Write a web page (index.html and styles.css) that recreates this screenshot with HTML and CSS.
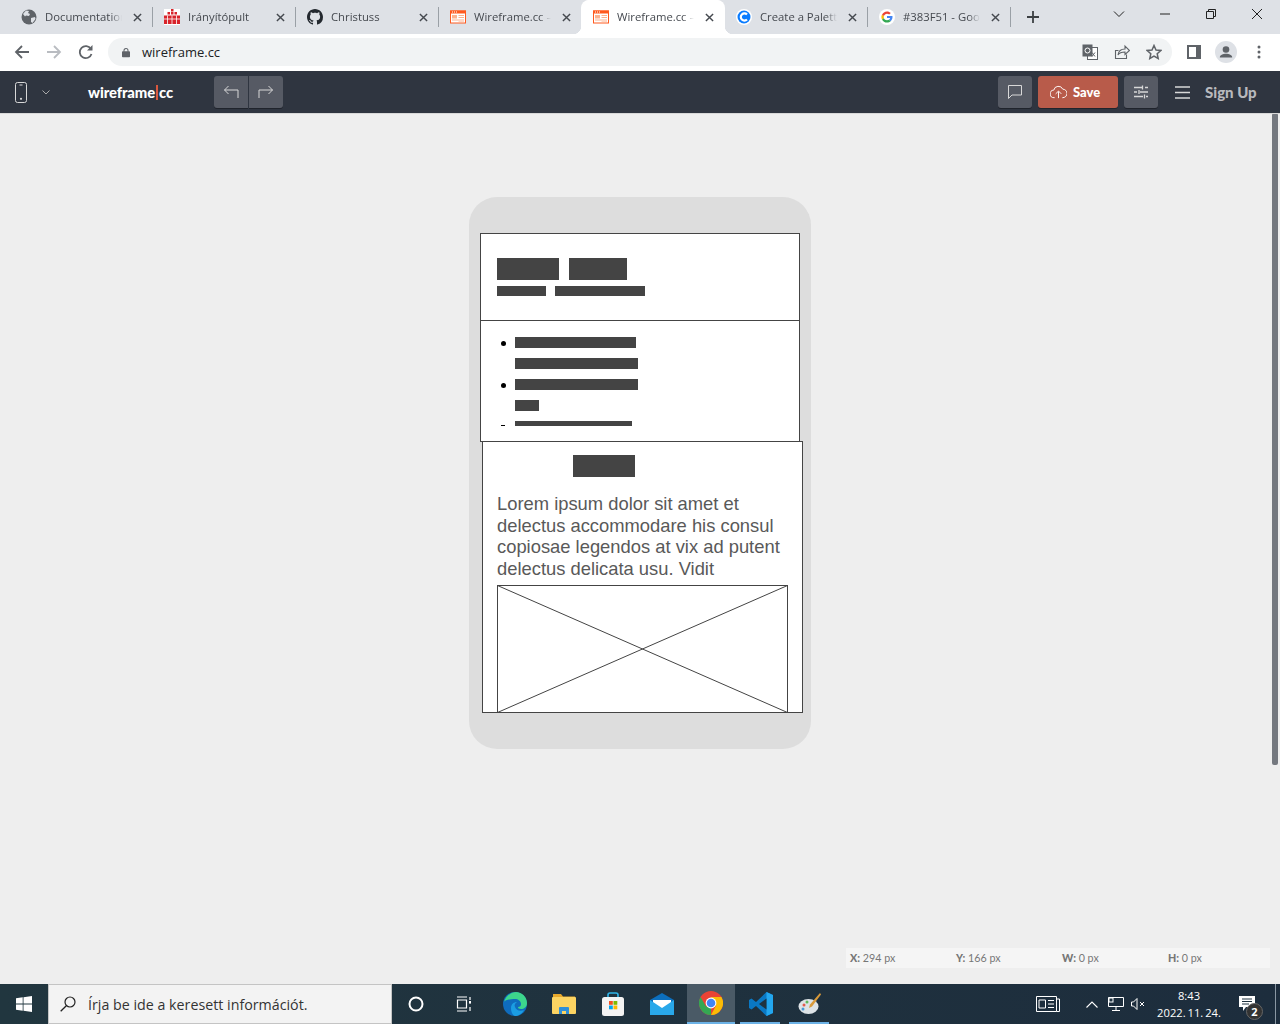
FILE: index.html
```html
<!DOCTYPE html>
<html lang="hu">
<head>
<meta charset="utf-8">
<title>Wireframe.cc</title>
<link rel="stylesheet" href="styles.css">
</head>
<body>
<div class="screen">
  <header class="tabstrip">
    <div class="tab">
      <svg class="fav" viewBox="0 0 16 16"><circle cx="8" cy="8" r="7.5" fill="#5f6368"/><path d="M2 5l3-3.5 3 .5-1 2 2 1-1 2-3-.5-1 1zM10 9l4-1 .5 2-3 4-1.500-1z" fill="#dee1e6"/></svg>
      <span class="title">Documentation</span>
      <svg class="close" viewBox="0 0 10 10"><path d="M1 1l8 8M9 1l-8 8"/></svg>
    </div>
    <div class="tab">
      <svg class="fav" viewBox="0 0 16 16"><rect width="16" height="16" fill="#fff"/><path d="M7 0h2.500v2.500H7zM3.500 3h2.500v2.500H3.500zM7 3h2.500v2.500H7zM10.500 3H13v2.500h-2.500zM0 6.500h16V15H0z" fill="#d8232a"/><path d="M0 10h16M3.500 6.500V15M8 6.500V15M12.500 6.500V15" stroke="#fff" stroke-width=".8"/></svg>
      <span class="title">Irányítópult</span>
      <svg class="close" viewBox="0 0 10 10"><path d="M1 1l8 8M9 1l-8 8"/></svg>
    </div>
    <div class="tab">
      <svg class="fav" viewBox="0 0 16 16"><path fill="#24292f" d="M8 0C3.580 0 0 3.580 0 8c0 3.540 2.290 6.530 5.470 7.590.4.070.55-.17.55-.38 0-.19-.01-.82-.01-1.490-2.010.37-2.530-.49-2.690-.94-.09-.23-.48-.94-.82-1.130-.28-.15-.68-.52-.01-.53.63-.01 1.080.58 1.230.82.720 1.210 1.870.87 2.330.66.070-.52.280-.87.510-1.070-1.780-.2-3.640-.89-3.640-3.950 0-.87.310-1.590.820-2.150-.08-.2-.36-1.020.08-2.120 0 0 .67-.21 2.200.82.640-.18 1.320-.27 2-.27s1.360.09 2 .27c1.530-1.040 2.200-.82 2.200-.82.440 1.100.160 1.920.080 2.120.510.560.820 1.270.820 2.150 0 3.070-1.870 3.750-3.650 3.950.290.250.540.730.540 1.480 0 1.070-.010 1.930-.010 2.200 0 .21.150.46.550.38A8.010 8.010 0 0 0 16 8c0-4.420-3.580-8-8-8z"/></svg>
      <span class="title">Christuss</span>
      <svg class="close" viewBox="0 0 10 10"><path d="M1 1l8 8M9 1l-8 8"/></svg>
    </div>
    <div class="tab tab-before-active">
      <svg class="fav" viewBox="0 0 16 13"><rect x=".5" y=".5" width="15" height="12" fill="#fff" stroke="#ff5a1f"/><path d="M0 0h16v3H0z" fill="#ff5a1f"/><path d="M2 1h1v1H2zM4 1h1v1H4zM6 1h1v1H6z" fill="#fff"/><path d="M2 4.500h5v3.500H2zM8.500 4.500H14v1H8.500zM8.500 6.500H14v1H8.500zM2 9h12v1H2zM8.500 11H14v.8H8.500z" fill="#fbb28f"/></svg>
      <span class="title">Wireframe.cc –</span>
      <svg class="close" viewBox="0 0 10 10"><path d="M1 1l8 8M9 1l-8 8"/></svg>
    </div>
    <div class="tab tab-active">
      <svg class="fav" viewBox="0 0 16 13"><rect x=".5" y=".5" width="15" height="12" fill="#fff" stroke="#ff5a1f"/><path d="M0 0h16v3H0z" fill="#ff5a1f"/><path d="M2 1h1v1H2zM4 1h1v1H4zM6 1h1v1H6z" fill="#fff"/><path d="M2 4.500h5v3.500H2zM8.500 4.500H14v1H8.500zM8.500 6.500H14v1H8.500zM2 9h12v1H2zM8.500 11H14v.8H8.500z" fill="#fbb28f"/></svg>
      <span class="title">Wireframe.cc –</span>
      <svg class="close" viewBox="0 0 10 10"><path d="M1 1l8 8M9 1l-8 8"/></svg>
    </div>
    <div class="tab">
      <svg class="fav" viewBox="0 0 16 16"><circle cx="8" cy="8" r="8" fill="#fff"/><circle cx="8" cy="8" r="6.500" fill="#0a7cff"/><path d="M11 5.500a3.600 3.600 0 1 0 0 5" fill="none" stroke="#fff" stroke-width="2.200"/></svg>
      <span class="title">Create a Palette</span>
      <svg class="close" viewBox="0 0 10 10"><path d="M1 1l8 8M9 1l-8 8"/></svg>
    </div>
    <div class="tab">
      <svg class="fav" viewBox="0 0 16 16"><circle cx="8" cy="8" r="8" fill="#fff"/><path d="M13.500 8.100c0-.4 0-.8-.1-1.100H8v2.100h3.100c-.1.700-.5 1.300-1.200 1.700l1.800 1.400c1.100-1 1.800-2.400 1.800-4.100z" fill="#4285f4"/><path d="M8 13.600c1.500 0 2.800-.5 3.700-1.400l-1.800-1.400c-.5.300-1.100.5-1.900.5-1.500 0-2.700-1-3.100-2.300L3 10.400c.9 1.900 2.800 3.200 5 3.200z" fill="#34a853"/><path d="M4.900 9c-.2-.6-.2-1.300 0-1.900L3 5.600c-.8 1.500-.8 3.300 0 4.800z" fill="#fbbc05"/><path d="M8 4.700c.8 0 1.600.3 2.200.9l1.600-1.600C10.800 3 9.500 2.400 8 2.400c-2.200 0-4.100 1.300-5 3.200l1.900 1.500C5.300 5.700 6.500 4.700 8 4.700z" fill="#ea4335"/></svg>
      <span class="title">#383F51 - Google</span>
      <svg class="close" viewBox="0 0 10 10"><path d="M1 1l8 8M9 1l-8 8"/></svg>
    </div>
    <svg class="newtab" viewBox="0 0 12 12"><path d="M6 0v12M0 6h12"/></svg>
    <div class="winctrls">
      <svg class="winbtn" viewBox="0 0 12 12"><path d="M1 3.500l5 5 5-5"/></svg>
      <svg class="winbtn" viewBox="0 0 12 12"><path d="M1 6h10"/></svg>
      <svg class="winbtn" viewBox="0 0 12 12"><path d="M1.500 3.500h7v7h-7zM3.500 3.500v-2h7v7h-2"/></svg>
      <svg class="winbtn" viewBox="0 0 12 12"><path d="M1 1l10 10M11 1L1 11"/></svg>
    </div>
  </header>

  <nav class="toolbar">
    <svg class="nav-ic" viewBox="0 0 16 16"><path d="M15 8H2M8 2L2 8l6 6" fill="none" stroke="#5f6368" stroke-width="1.800"/></svg>
    <svg class="nav-ic" viewBox="0 0 16 16"><path d="M1 8h13M8 2l6 6-6 6" fill="none" stroke="#b9bcc1" stroke-width="1.800"/></svg>
    <svg class="nav-ic" viewBox="0 0 16 16"><path d="M13.500 10a6 6 0 1 1-.6-5" fill="none" stroke="#5f6368" stroke-width="1.800"/><path d="M14.500 1v5.500H9z" fill="#5f6368"/></svg>
    <div class="omnibox">
      <svg class="lock" viewBox="0 0 10 12"><path d="M2.500 5V3.500a2.500 2.500 0 0 1 5 0V5" fill="none" stroke="#5f6368" stroke-width="1.300"/><rect y="4.500" width="10" height="7.500" rx="1" fill="#5f6368"/></svg>
      <span class="url">wireframe.cc</span>
      <svg class="omni-ic" viewBox="0 0 16 16"><rect x="5.500" y="3.500" width="10" height="12" fill="#fff" stroke="#5f6368"/><rect x=".5" y=".5" width="10" height="12" fill="#5f6368"/><circle cx="5.500" cy="6.500" r="2.500" fill="none" stroke="#fff"/><path d="M10 8.500l3 4M13 8.500l-3 4" stroke="#5f6368"/></svg>
      <svg class="omni-ic" viewBox="0 0 16 16"><path d="M12.500 10.500v4h-11v-8h3" fill="none" stroke="#5f6368" stroke-width="1.100"/><path d="M4 11c.5-4 3.500-6 7-6V2l4.500 4.500L11 10.500V8c-3 0-5.500.5-7 3z" fill="none" stroke="#5f6368" stroke-width="1.100"/></svg>
      <svg class="omni-ic" viewBox="0 0 16 16"><path d="M8 1.500l2 4.500 4.800.5-3.600 3.200 1 4.800L8 12.100 3.800 14.500l1-4.800L1.200 6.500 6 6z" fill="none" stroke="#5f6368" stroke-width="1.500"/></svg>
    </div>
    <svg class="side-ic" viewBox="0 0 14 14"><path d="M0 0h14v14H0zM2 2v10h7V2z" fill="#5f6368" fill-rule="evenodd"/></svg>
    <svg class="avatar" viewBox="0 0 22 22"><circle cx="11" cy="11" r="11" fill="#dee1e6"/><circle cx="11" cy="8.500" r="3.300" fill="#5f6368"/><path d="M4.800 16.500c0-2.600 3.200-3.700 6.200-3.700s6.200 1.100 6.200 3.700z" fill="#5f6368"/></svg>
    <svg class="dots" viewBox="0 0 4 14"><circle cx="2" cy="2" r="1.500"/><circle cx="2" cy="7" r="1.500"/><circle cx="2" cy="12" r="1.500"/></svg>
  </nav>

  <div class="appbar">
    <svg class="device" viewBox="0 0 12 21"><rect x=".5" y=".5" width="11" height="20" rx="2"/><path d="M4.500 3h3"/><circle cx="6" cy="16.800" r="1.100" fill="#d8d8d8" stroke="none"/></svg>
    <svg class="device-caret" viewBox="0 0 8 5"><path d="M.5.500L4 4 7.500.5"/></svg>
    <div class="logo">wireframe<span class="logo-bar"></span>cc</div>
    <div class="btn-group">
      <span class="btn btn-hist"><svg class="btn-ic" viewBox="0 0 16 14"><path d="M15 13V5H1.500M5.500 1L1.500 5l4 4"/></svg></span>
      <span class="btn btn-hist"><svg class="btn-ic" viewBox="0 0 16 14"><path d="M1 13V5h13.500M10.500 1l4 4-4 4"/></svg></span>
    </div>
    <span class="btn btn-tool btn-comment"><svg class="btn-ic" viewBox="0 0 14 14"><path d="M.5.500h13v9.500H4L.5 13.500z"/></svg></span>
    <span class="btn-save"><svg class="save-ic" viewBox="0 0 18 14"><path d="M5 13H4.500a4 4 0 0 1-.5-8 5 5 0 0 1 9.500-1 4.500 4.500 0 0 1 0 9H13M9 13.500V6.500M6 9l3-3 3 3"/></svg>Save</span>
    <span class="btn btn-tool"><svg class="btn-ic btn-ic-wide" viewBox="0 0 14 14"><path d="M0 2.500h8M11 2.500h3M8.500 .5v4M0 7h3M6 7h8M5 5v4M0 11.500h9M12 11.500h2M10.500 9.500v4"/></svg></span>
    <svg class="burger" viewBox="0 0 15 13"><path d="M0 1h15M0 6.500h15M0 12h15"/></svg>
    <span class="signup">Sign Up</span>
  </div>

  <main class="workspace">
    <div class="canvas">
      <div class="phone">
        <section class="wf wf-header">
          <span class="ink ink-a"></span><span class="ink ink-b"></span>
          <span class="ink ink-c"></span><span class="ink ink-d"></span>
        </section>
        <section class="wf wf-list">
          <span class="ink li-1"></span><span class="ink li-2"></span><span class="ink li-3"></span><span class="ink li-4"></span>
          <span class="ink li-5"></span>
          <i class="bullet bullet-1"></i><i class="bullet bullet-2"></i><i class="bullet bullet-3"></i>
        </section>
        <section class="wf wf-body">
          <span class="ink ink-head"></span>
          <p class="lorem">Lorem ipsum dolor sit amet et<br>delectus accommodare his consul<br>copiosae legendos at vix ad putent<br>delectus delicata usu. Vidit</p>
          <svg class="placeholder" viewBox="0 0 291 128" preserveAspectRatio="none"><rect x=".5" y=".5" width="290" height="127"/><path d="M.5.500l290 127M290.500.500L.5 127.500"/></svg>
        </section>
      </div>
      <div class="status">
        <span><b>X:</b> 294 px</span><span><b>Y:</b> 166 px</span><span><b>W:</b> 0 px</span><span><b>H:</b> 0 px</span>
      </div>
    </div>
    <div class="scrollbar"><div class="thumb"></div></div>
  </main>

  <footer class="taskbar">
    <div class="start"><svg class="winlogo" viewBox="0 0 16 16"><path d="M0 2.300l6.700-1v6.300H0zM7.500 1.200L16 0v7.600H7.500zM0 8.400h6.700v6.300l-6.700-1zM7.500 8.400H16V16l-8.500-1.200z" fill="#fff"/></svg></div>
    <div class="search">
      <svg class="search-ic" viewBox="0 0 16 16"><circle cx="10" cy="6" r="5" fill="none" stroke="#222" stroke-width="1.200"/><path d="M6.300 9.700L.7 15.300" stroke="#222" stroke-width="1.300"/></svg>
      <span class="search-text">Írja be ide a keresett információt.</span>
    </div>
    <div class="tb-slot tb-narrow"><svg class="tb-ic" viewBox="0 0 16 16"><circle cx="8" cy="8" r="6.500" fill="none" stroke="#fff" stroke-width="2"/></svg></div>
    <div class="tb-slot tb-narrow"><svg class="tb-ic" viewBox="0 0 16 16"><path d="M1 1h10M1 15h10M1.500 4h9v8h-9zM14 1v3M14 7v1M14 11v4" fill="none" stroke="#fff" stroke-width="1.200"/><rect x="13" y="5" width="2" height="2" fill="#fff"/></svg></div>
    <div class="tb-slot tb-first"><svg class="tb-app" viewBox="0 0 24 24"><circle cx="12" cy="12" r="12" fill="#0f6cbd"/><path d="M1 10C3 3 9 0 13 0c6 0 11 5 11 11 0 4-3 6-6 6-2 0-3-1-3-2 2 0 3-1 3-3 0-3-3-5-6-5-5 0-10 1-11 3z" fill="#3dd68c"/><path d="M8 16c0-4 3-6 6-6-2 1-3 3-2 5 1 3 5 5 9 3-2 4-6 6-9 6-3-1-4-5-4-8z" fill="#1b9de2"/></svg></div>
    <div class="tb-slot"><svg class="tb-app" viewBox="0 0 24 20"><path d="M1 0h8l2 2.500h12V5H1z" fill="#e8a92c"/><rect x="0" y="3" width="24" height="17" rx="1" fill="#fcd462"/><path d="M7 20v-6a1 1 0 0 1 1-1h8a1 1 0 0 1 1 1v6h-3v-3h-4v3z" fill="#2f8fd8"/></svg></div>
    <div class="tb-slot"><svg class="tb-app" viewBox="0 0 24 24"><path d="M7 7V3a2 2 0 0 1 2-2h6a2 2 0 0 1 2 2v4" fill="none" stroke="#30b5e8" stroke-width="1.600"/><rect x="1" y="5" width="22" height="19" rx="2.500" fill="#f3f3f3"/><rect x="8" y="9" width="3.800" height="3.800" fill="#f25022"/><rect x="12.500" y="9" width="3.800" height="3.800" fill="#7fba00"/><rect x="8" y="13.500" width="3.800" height="3.800" fill="#00a4ef"/><rect x="12.500" y="13.500" width="3.800" height="3.800" fill="#ffb900"/></svg></div>
    <div class="tb-slot"><svg class="tb-app" viewBox="0 0 24 22"><path d="M0 7L12 0l12 7v15H0z" fill="#0c6fbd"/><path d="M3 7h18v7l-9 5-9-5z" fill="#fff"/><path d="M0 7l12 8 12-8v15H0z" fill="#29a8ea"/></svg></div>
    <div class="tb-slot tb-chrome"><svg class="tb-app" viewBox="0 0 24 24"><circle cx="12" cy="12" r="12" fill="#ea4335"/><path d="M12 24A12 12 0 0 1 1.600 6L7 15.500l5 0z" fill="#34a853"/><path d="M12 24a12 12 0 0 0 10.400-18H12l5 8.500z" fill="#fbbc05"/><circle cx="12" cy="12" r="5.400" fill="#fff"/><circle cx="12" cy="12" r="4.300" fill="#4285f4"/></svg></div>
    <div class="tb-slot tb-open"><svg class="tb-app" viewBox="0 0 24 24"><path d="M17.500 0L24 3v18l-6.500 3L7 14l-4.500 3.500L0 16V8l2.500-1.500L7 10z" fill="#0a78c4"/><path d="M17.500 0L24 3v18l-6.500 3z" fill="#23a7ef"/><path d="M17.500 6.500V17.500L10 12z" fill="#1f3340"/></svg></div>
    <div class="tb-slot tb-open"><svg class="tb-app" viewBox="0 0 24 24"><ellipse cx="10.500" cy="14.500" rx="10" ry="7.500" fill="#dde3e6"/><circle cx="6" cy="13" r="1.500" fill="#e25b4e"/><circle cx="9" cy="10" r="1.500" fill="#5fba5c"/><circle cx="5" cy="17" r="1.500" fill="#4a9ad9"/><path d="M22 1l1 1.500-9 12-3 1.500 1-3.500z" fill="#d99a3a"/></svg></div>
    <div class="tray">
      <svg class="tray-news" viewBox="0 0 24 16"><path d="M.5.500h20v15H.5zM20.500 3h3v12.500h-3M3 4h6.500v8H3zM12 4.500h6M12 8h6M12 11.500h6" fill="none" stroke="#fff"/></svg>
      <svg class="tray-chev" viewBox="0 0 12 7"><path d="M.5 6.500L6 1l5.500 5.500" fill="none" stroke="#fff" stroke-width="1.100"/></svg>
      <svg class="tray-net" viewBox="0 0 16 14"><path d="M.5.500h15v9H.5zM8 9.500v4M4 13.500h8" fill="none" stroke="#fff"/><rect x="1" y="1" width="4" height="4" fill="#1f3340" stroke="#fff"/></svg>
      <svg class="tray-vol" viewBox="0 0 14 12"><path d="M.5 4h2L6 .5v11L2.500 8h-2zM9 4l4 4M13 4l-4 4" fill="none" stroke="#fff"/></svg>
      <div class="clock"><span>8:43</span><span>2022. 11. 24.</span></div>
      <div class="notify">
        <svg class="notify-ic" viewBox="0 0 16 15"><path d="M0 0h16v11H7l-3 4v-4H0z" fill="#fff"/><path d="M3 3h10M3 5.500h10M3 8h7" stroke="#1f3340"/></svg>
        <span class="badge">2</span>
      </div>
      <span class="peek"></span>
    </div>
  </footer>
</div>
</body>
</html>
```

FILE: styles.css
```css
* { box-sizing: border-box; }
html, body { margin: 0; height: 100%; overflow: hidden; }
body { font-family: "Open Sans", "Noto Sans", sans-serif; }
.screen { width: 1280px; height: 1024px; display: flex; flex-direction: column; background: #eee; }

/* tab strip */
.tabstrip { height: 34px; flex: none; background: #dee1e6; display: flex; align-items: stretch; padding-left: 10px; }
.tab { width: 143px; height: 34px; display: flex; align-items: center; padding: 0 10px 0 11px; position: relative; }
.tab::after { content: ""; position: absolute; right: 0; top: 7px; height: 20px; width: 1px; background: #9aa0a6; }
.tab-before-active::after, .tab-active::after { display: none; }
.tab-active { background: #fff; border-radius: 8px 8px 0 0; box-shadow: -1px 0 0 #fff; }
.tab-active::before { content: ""; position: absolute; left: -9px; bottom: 0; width: 8px; height: 8px; background: radial-gradient(circle at 0 0, transparent 8px, #fff 8.500px); }
.tab-active + .tab::before { content: ""; position: absolute; left: 0; bottom: 0; width: 8px; height: 8px; background: radial-gradient(circle at 100% 0, transparent 8px, #fff 8.500px); }
.fav { width: 16px; height: 16px; flex: none; }
.title { flex: 1; min-width: 0; margin-left: 8px; font-size: 11.300px; line-height: 16px; padding-bottom: 1px; color: #45494f; white-space: nowrap; overflow: hidden; -webkit-mask-image: linear-gradient(90deg, #000 85%, transparent 100%); mask-image: linear-gradient(90deg, #000 85%, transparent 100%); }
.close { width: 9px; height: 9px; flex: none; margin-left: 11px; margin-right: 1px; fill: none; stroke: #45494f; stroke-width: 1.600; }
.newtab { width: 12px; height: 12px; margin: 11px 0 0 16px; fill: none; stroke: #3c4043; stroke-width: 1.800; flex: none; }
.winctrls { margin-left: 74px; display: flex; gap: 34px; padding-top: 8px; }
.winbtn { width: 12px; height: 12px; fill: none; stroke: #222; stroke-width: 1; }

/* toolbar */
.toolbar { height: 37px; flex: none; background: #fff; display: flex; align-items: flex-start; padding: 4px 0 0 14px; }
.nav-ic { width: 16px; height: 16px; margin: 6px 16px 0 0; flex: none; }
.omnibox { width: 1064px; height: 28px; margin-left: -2px; background: #f1f3f4; border-radius: 14px; display: flex; align-items: center; padding: 0 10px 0 14px; }
.lock { width: 8px; height: 11px; flex: none; }
.url { flex: 1; margin-left: 12px; font-size: 13px; color: #202124; }
.omni-ic { width: 16px; height: 16px; flex: none; margin-left: 16px; }
.side-ic { width: 14px; height: 14px; margin: 7px 0 0 15px; flex: none; }
.avatar { width: 22px; height: 22px; margin: 3px 0 0 14px; flex: none; }
.dots { width: 4px; height: 14px; margin: 7px 0 0 20px; fill: #5f6368; flex: none; }

/* app bar */
.appbar { height: 42px; flex: none; background: #2f3540; display: flex; align-items: center; padding-left: 15px; box-shadow: 0 1px 0 #d8d8d8; position: relative; }
.device { width: 12px; height: 21px; fill: none; stroke: #d8d8d8; stroke-width: 1; flex: none; }
.device-caret { width: 8px; height: 5px; margin-left: 15px; fill: none; stroke: #aaa; stroke-width: 1; flex: none; }
.logo { margin-left: 38px; width: 126px; font-family: Lato, "Open Sans", sans-serif; font-weight: 900; font-size: 14.800px; letter-spacing: -.1px; color: #fff; display: flex; align-items: center; flex: none; }
.logo-bar { width: 2px; height: 15px; background: #d9583f; margin: 0 1px; }
.btn-group { display: flex; gap: 1px; width: 69px; flex: none; }
.btn { height: 32px; background: #565a64; border-radius: 3px; display: flex; align-items: center; justify-content: center; box-shadow: 0 1px 0 #20242c; flex: none; }
.btn-hist { width: 34px; }
.btn-hist:first-child { border-radius: 3px 0 0 3px; }
.btn-hist:last-child { border-radius: 0 3px 3px 0; }
.btn-ic { width: 16px; height: 14px; fill: none; stroke: #d8d8d8; stroke-width: 1; }
.btn-ic-wide { width: 14px; height: 14px; stroke-width: 1.300; }
.btn-tool { width: 34px; }
.btn-comment { margin-left: 715px; }
.btn-save { width: 80px; height: 32px; margin: 0 6px; background: #b85b4a; border-radius: 3px; display: flex; align-items: center; padding-left: 12px; font-family: Lato, "Open Sans", sans-serif; font-weight: 900; font-size: 13px; color: #fff; box-shadow: 0 1px 0 #20242c; flex: none; }
.save-ic { width: 17px; height: 14px; margin-right: 6px; fill: none; stroke: #fff; stroke-width: 1; }
.burger { width: 15px; height: 13px; margin-left: 17px; fill: none; stroke: #d8d8d8; stroke-width: 1.300; flex: none; }
.signup { margin-left: 15px; font-family: Lato, "Open Sans", sans-serif; font-weight: 900; font-size: 15px; color: #b8b9bd; white-space: nowrap; }

/* workspace */
.workspace { flex: 1; min-height: 0; display: flex; }
.canvas { flex: 1; min-width: 0; display: flex; flex-direction: column; padding-left: 8px; }
.scrollbar { width: 8px; flex: none; background: #eee; }
.thumb { width: 6px; height: 652px; background: #74787f; border-radius: 2px; }
.phone { width: 342px; height: 552px; margin: 84px auto 0; background: #ddd; border-radius: 28px; position: relative; flex: none; }
.wf { position: absolute; background: #fff; border: 1px solid #444; overflow: hidden; }
.wf-header { left: 11px; top: 36px; width: 320px; height: 88px; }
.wf-list { left: 11px; top: 123px; width: 320px; height: 122px; }
.wf-body { left: 13px; top: 244px; width: 321px; height: 272px; }
.ink { position: absolute; background: #444; }
.ink-a { left: 16px; top: 24px; width: 62px; height: 22px; }
.ink-b { left: 88px; top: 24px; width: 58px; height: 22px; }
.ink-c { left: 16px; top: 52px; width: 49px; height: 10px; }
.ink-d { left: 74px; top: 52px; width: 90px; height: 10px; }
.li-1 { left: 34px; top: 16px; width: 121px; height: 11px; }
.li-2 { left: 34px; top: 37px; width: 123px; height: 11px; }
.li-3 { left: 34px; top: 58px; width: 123px; height: 11px; }
.li-4 { left: 34px; top: 79px; width: 24px; height: 11px; }
.li-5 { left: 34px; top: 100px; width: 117px; height: 5px; }
.bullet { position: absolute; left: 19.500px; width: 5px; height: 5px; background: #000; border-radius: 50%; }
.bullet-1 { top: 19.500px; }
.bullet-2 { top: 61.500px; }
.bullet-3 { top: 104px; height: 1px; border-radius: 0; width: 4px; left: 20px; }
.ink-head { left: 90px; top: 13px; width: 62px; height: 22px; }
.lorem { position: absolute; left: 14px; top: 51px; margin: 0; font-family: "Liberation Sans", Arial, sans-serif; font-size: 18.370px; line-height: 21.600px; color: #595959; white-space: nowrap; }
.placeholder { position: absolute; left: 14px; top: 143px; width: 291px; height: 128px; fill: none; stroke: #444; stroke-width: 1; }
.status { width: 424px; height: 20px; margin: auto 2px 16px auto; padding: 0 0 1px 4px; background: #f5f5f5; display: grid; grid-template-columns: repeat(4, 106px); align-items: center; font-family: Lato, "Open Sans", sans-serif; font-size: 10.700px; color: #777; flex: none; }
.status b { font-weight: 900; }

/* taskbar */
.taskbar { height: 40px; flex: none; background: linear-gradient(90deg, #21363f, #1d2d3d); display: flex; align-items: stretch; color: #fff; }
.start { width: 48px; display: flex; align-items: center; justify-content: center; flex: none; }
.winlogo { width: 16px; height: 16px; }
.search { width: 344px; flex: none; background: #f3f3f3; border: 1px solid #c4c4c4; display: flex; align-items: center; padding-left: 11px; }
.search-ic { width: 16px; height: 16px; flex: none; }
.search-text { margin-left: 12px; font-size: 14.250px; color: #333; white-space: nowrap; }
.tb-slot { width: 49px; flex: none; display: flex; align-items: center; justify-content: center; }
.tb-narrow { width: 48px; }
.tb-first { margin-left: 2px; }
.tb-ic { width: 16px; height: 16px; }
.tb-app { width: 24px; height: 24px; }
.tb-chrome { width: 48px; margin: 0 1px; background: #4a5a66; border-bottom: 2px solid #6cb2e6; }
.tb-open { position: relative; }
.tb-open::after { content: ""; position: absolute; left: 4px; right: 5px; bottom: 0; height: 2px; background: #6cb2e6; }
.tray { flex: 1; display: flex; align-items: center; padding-left: 202px; }
.tray-news { width: 24px; height: 16px; flex: none; }
.tray-chev { width: 12px; height: 7px; margin-left: 26px; flex: none; }
.tray-net { width: 16px; height: 14px; margin-left: 10px; flex: none; }
.tray-vol { width: 14px; height: 12px; margin-left: 7px; flex: none; }
.clock { width: 70px; margin-left: 9px; display: flex; flex-direction: column; align-items: center; font-size: 11.200px; line-height: 17px; word-spacing: -1px; flex: none; }
.notify { margin-left: 14px; position: relative; width: 26px; height: 28px; flex: none; }
.notify-ic { width: 16px; height: 15px; position: absolute; left: 1px; top: 6px; }
.badge { position: absolute; left: 8px; top: 13px; width: 17px; height: 17px; border-radius: 50%; background: #333; border: 1px solid #666; font-size: 11px; font-weight: 700; line-height: 15px; text-align: center; }
.peek { width: 1px; height: 40px; background: #8a97a3; margin-left: auto; margin-right: 4px; flex: none; }
```
